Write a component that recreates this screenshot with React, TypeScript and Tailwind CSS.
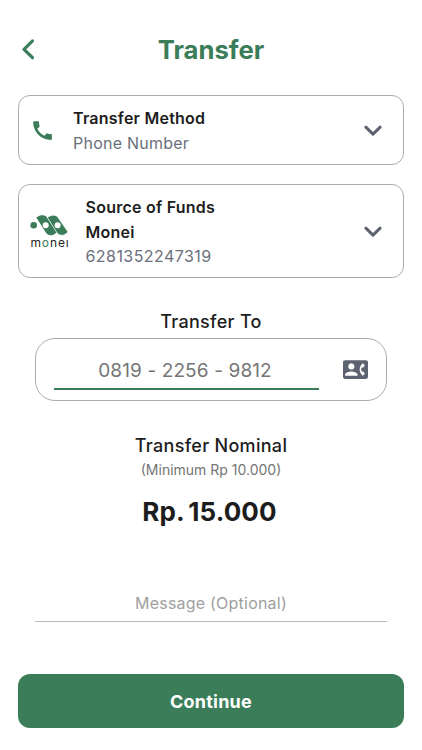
import { ReactNode, useState } from "react";
import { MdCall, MdContactPhone } from "react-icons/md";

function ChevronDown() {
  return (
    <svg width="18" height="12" viewBox="0 0 18 12" fill="none" className="shrink-0">
      <path d="M1.9 2.2L9 9.1L16.1 2.2" stroke="#5d6270" strokeWidth="3" strokeLinecap="round" strokeLinejoin="round" />
    </svg>
  );
}

function MoneiLogo() {
  return (
    <div className="flex w-10 flex-col items-center pt-[2px]">
      <svg width="40" height="21" viewBox="0 0 40 21" className="block">
        <circle cx="3.7" cy="10.3" r="3.3" fill="#3b7c59" />
        <g fill="#3b7c59">
          <path d="M6.3 2.4C8.5 .8 10.5 .2 12.6 .2C14.7 .2 16 1.1 17 2.5L27 16.9C24.8 19.2 22.8 20.3 20.7 20.3C18.5 20.3 17 19.3 16 17.8Z" />
          <path stroke="#fff" strokeWidth=".7" d="M17.3 2.4C19.5 .8 21.5 .2 23.6 .2C25.7 .2 27 1.1 28 2.5L38 16.9C35.8 19.2 33.8 20.3 31.7 20.3C29.5 20.3 28 19.3 27 17.8Z" />
        </g>
        <circle cx="15.7" cy="10.3" r="3" fill="#fff" />
        <circle cx="27.6" cy="10.3" r="3" fill="#fff" />
      </svg>
      <span className="text-[12px] leading-[14px] tracking-[0.9px] text-[#222222]">
        m<span className="text-[#3b7c59]">o</span>neı
      </span>
    </div>
  );
}

function SelectCard({ icon, className, children }: { icon: ReactNode; className: string; children: ReactNode }) {
  return (
    <button type="button" className={`flex w-full items-center rounded-xl border border-[#acacac] pr-[21px] text-left ${className}`}>
      {icon}
      <div className="flex-1 text-base tracking-[0.24px]">{children}</div>
      <ChevronDown />
    </button>
  );
}

export default function App() {
  const [phone, setPhone] = useState("0819 - 2256 - 9812");
  const [message, setMessage] = useState("");

  return (
    <div className="flex h-[750px] w-full flex-col bg-white px-[18px] font-['Inter',sans-serif] text-[#1d1d1d]">
      <header className="mt-[29px] grid h-10 grid-cols-[1fr_auto_1fr] items-center text-[#3b7c59]">
        <button type="button" aria-label="Back" className="pl-[3px]">
          <svg width="14" height="22" viewBox="0 0 14 22" fill="none">
            <path d="M11.5 2.9L3 11.3L11.5 19.7" stroke="currentColor" strokeWidth="3.2" strokeLinecap="round" strokeLinejoin="round" />
          </svg>
        </button>
        <h1 className="pt-0.5 text-[25.7px] font-bold">Transfer</h1>
      </header>

      <SelectCard
        className="mt-[26px] h-[70px] pt-px pl-[11px]"
        icon={<MdCall className="mr-[18px] text-[25px] text-[#3b7c59]" />}
      >
        <p className="leading-[25px] font-semibold">Transfer Method</p>
        <p className="leading-[24px] text-[#6b6f7c]">Phone Number</p>
      </SelectCard>

      <SelectCard className="mt-[19px] h-[94px] pt-px pl-[11px]" icon={<div className="mr-[15.5px]"><MoneiLogo /></div>}>
        <p className="leading-[25px] font-semibold">Source of Funds</p>
        <p className="leading-[24px] font-semibold">Monei</p>
        <p className="leading-[24px] tracking-[0.44px] text-[#6b6f7c]">6281352247319</p>
      </SelectCard>

      <section className="mt-[31px] px-[17px] text-center">
        <h2 className="text-lg leading-[26px] font-medium tracking-[0.3px]">Transfer To</h2>
        <div className="mt-[3px] flex h-[63px] items-center rounded-[20px] border border-[#acacac] px-[18px]">
          <input
            className="h-[41px] w-[265px] border-b-2 border-[#3b7c59] pt-[3px] pr-[3px] text-center text-[19px] tracking-[0.12px] text-[#757575] outline-none"
            value={phone}
            onChange={(e) => setPhone(e.target.value)}
          />
          <MdContactPhone className="ml-auto text-[25px] text-[#5d6270]" />
        </div>
      </section>

      <section className="mt-[32px] text-center">
        <h2 className="text-lg leading-[26px] font-medium tracking-[0.3px]">Transfer Nominal</h2>
        <p className="text-sm leading-[22px] text-[#757575]">(Minimum Rp 10.000)</p>
        <p className="mt-[13px] pr-[3px] text-[26px] leading-[36px] font-bold tracking-[0.1px] [word-spacing:-2px]">Rp. 15.000</p>
      </section>

      <div className="mt-[55px] px-[17px]">
        <input
          className="h-[37px] w-full border-b border-[#b9b9b9] pb-px text-center text-base tracking-[0.22px] outline-none placeholder:text-[#a0a0a0]"
          placeholder="Message (Optional)"
          value={message}
          onChange={(e) => setMessage(e.target.value)}
        />
      </div>

      <button type="button" className="mt-[52px] h-[54px] rounded-xl bg-[#3b7c59] pt-px text-lg font-bold tracking-[0.2px] text-white">
        Continue
      </button>
    </div>
  );
}
